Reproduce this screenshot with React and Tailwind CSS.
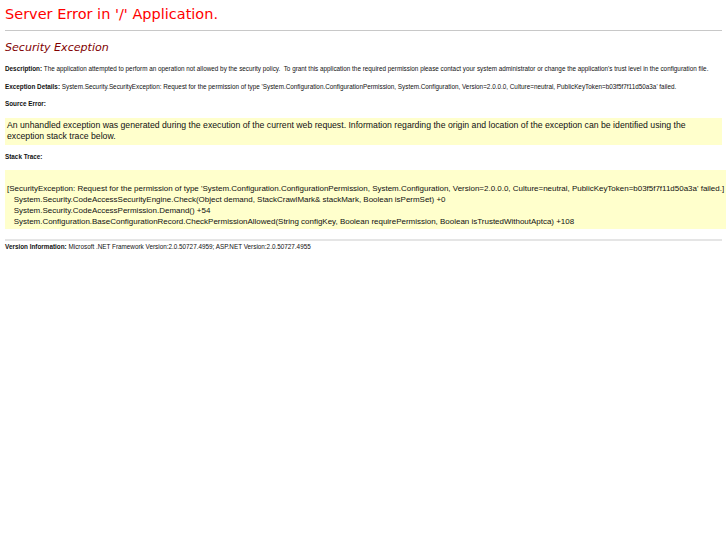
export default function App() {
  return (
    <div className="min-h-[545px] bg-white text-[#111] font-['Liberation_Sans',sans-serif] text-[6.35px]">
      <div className="px-[5px] pt-[5px]">
        <h1 className="font-['DejaVu_Sans',sans-serif] text-[14.5px] leading-[18px] text-[#ff0000]">
          Server Error in '/' Application.
        </h1>
        <hr className="mt-[7px] border-0 h-px bg-[#c8c8c8]" />
        <h2 className="mt-[9px] font-['DejaVu_Sans',sans-serif] italic text-[11.1px] leading-[15px] text-[#800000]">
          Security Exception
        </h2>
        <p className="mt-[9px] leading-[9px] whitespace-pre">
          <b>Description: </b>The application attempted to perform an operation not allowed by the security policy.  To grant this application the required permission please contact your system administrator or change the application's trust level in the configuration file.
        </p>
        <p className="mt-[9px] leading-[9px] whitespace-pre">
          <b>Exception Details: </b>System.Security.SecurityException: Request for the permission of type 'System.Configuration.ConfigurationPermission, System.Configuration, Version=2.0.0.0, Culture=neutral, PublicKeyToken=b03f5f7f11d50a3a' failed.
        </p>
        <p className="mt-[8px] leading-[9px] font-bold">Source Error:</p>
        <div className="mt-[10px] bg-[#ffffcc] px-[2px] pt-[2px] pb-[3px] text-[8.7px] leading-[11px]">
          An unhandled exception was generated during the execution of the current web request. Information regarding the origin and location of the exception can be identified using the exception stack trace below.
        </div>
        <p className="mt-[7px] leading-[9px] font-bold">Stack Trace:</p>
        <div className="mt-[9px] w-[721px] bg-[#ffffcc] pl-[2px] pt-[13px] pb-[2px] text-[7.97px] leading-[11px] whitespace-pre">
          <div>[SecurityException: Request for the permission of type 'System.Configuration.ConfigurationPermission, System.Configuration, Version=2.0.0.0, Culture=neutral, PublicKeyToken=b03f5f7f11d50a3a' failed.]</div>
          <div>   System.Security.CodeAccessSecurityEngine.Check(Object demand, StackCrawlMark&amp; stackMark, Boolean isPermSet) +0</div>
          <div>   System.Security.CodeAccessPermission.Demand() +54</div>
          <div>   System.Configuration.BaseConfigurationRecord.CheckPermissionAllowed(String configKey, Boolean requirePermission, Boolean isTrustedWithoutAptca) +108</div>
        </div>
        <hr className="mt-[10px] border-0 h-[2px] bg-[#e5e5e5]" />
        <p className="mt-px leading-[9px]">
          <b>Version Information: </b>Microsoft .NET Framework Version:2.0.50727.4959; ASP.NET Version:2.0.50727.4955
        </p>
      </div>
    </div>
  );
}
